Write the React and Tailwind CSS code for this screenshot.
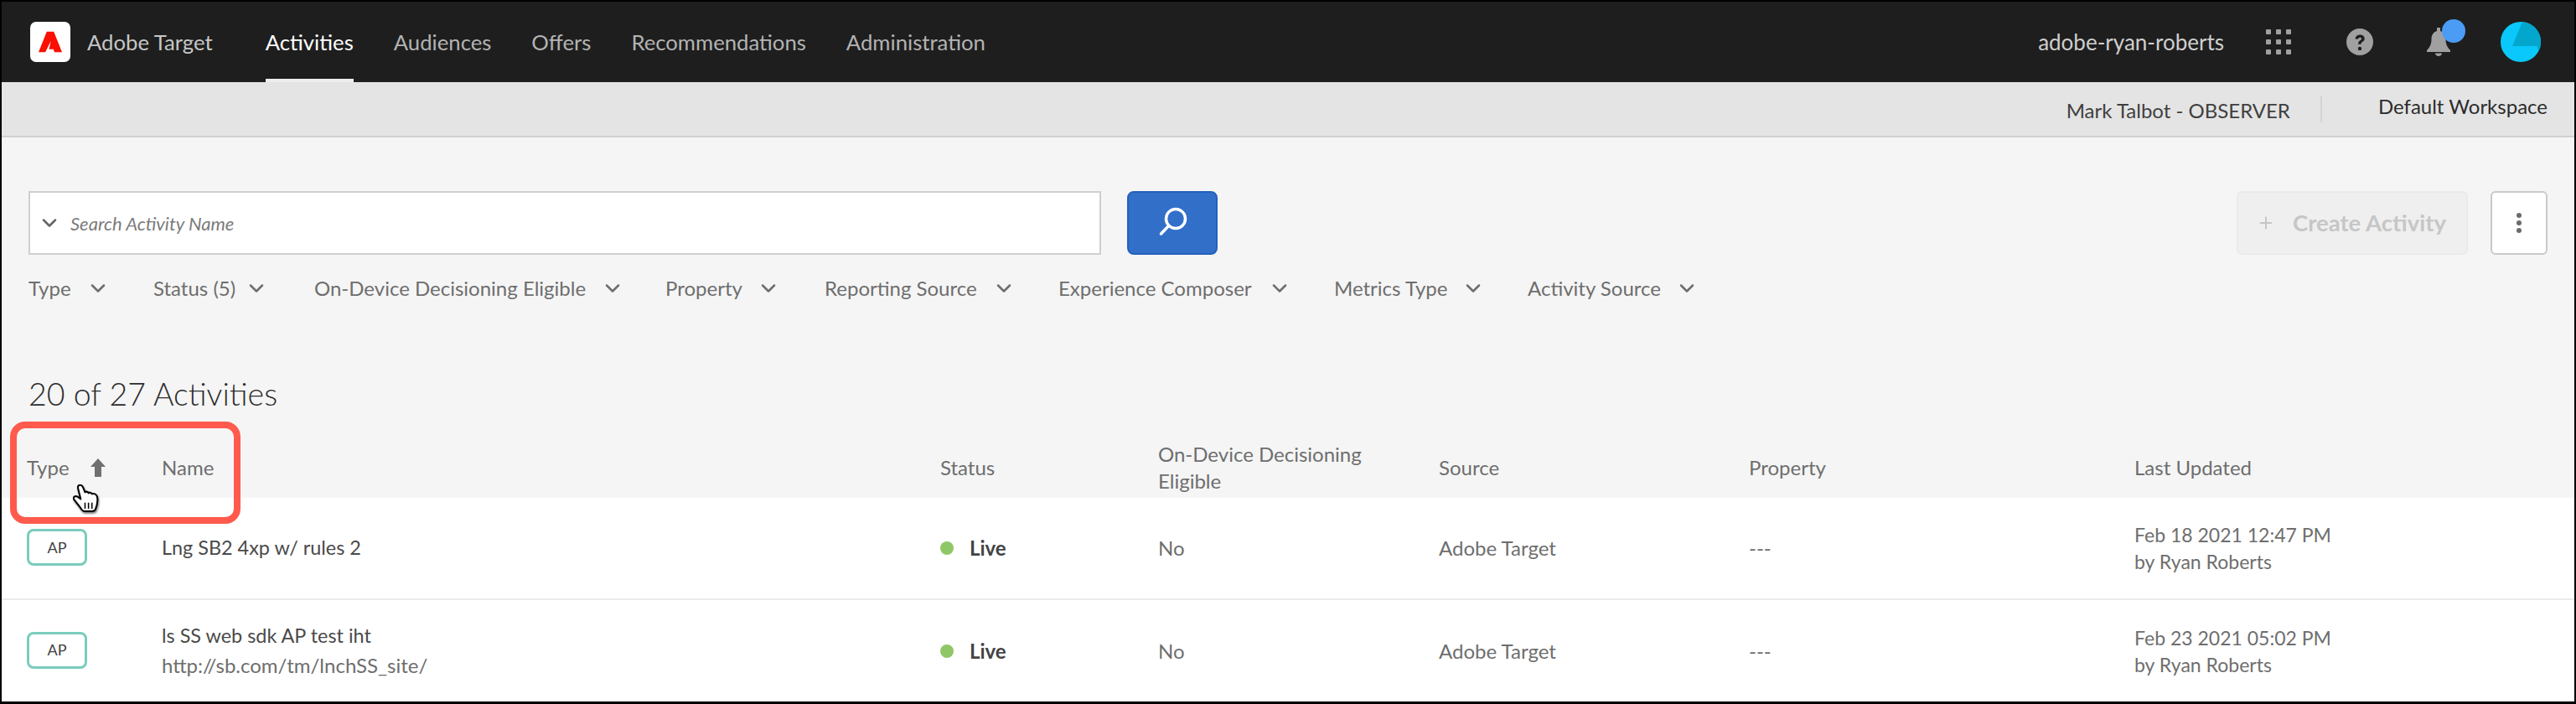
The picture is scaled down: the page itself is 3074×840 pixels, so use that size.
import React from 'react';
import { ChevronDown, Plus } from 'lucide-react';

const navLinks = ['Audiences', 'Offers', 'Recommendations', 'Administration'];

const filters = [
  { label: 'Type', width: 'w-[149px]', gap: 'ml-[18px]' },
  { label: 'Status (5)', width: 'w-[192px]', gap: 'ml-[11px]' },
  { label: 'On-Device Decisioning Eligible', width: 'w-[419px]', gap: 'ml-[18px]' },
  { label: 'Property', width: 'w-[190px]', gap: 'ml-[17px]' },
  { label: 'Reporting Source', width: 'w-[279px]', gap: 'ml-[18px]' },
  { label: 'Experience Composer', width: 'w-[329px]', gap: 'ml-[19px]' },
  { label: 'Metrics Type', width: 'w-[231px]', gap: 'ml-[17px]' },
  { label: 'Activity Source', width: 'w-[240px]', gap: 'ml-[17px]' },
];

const rows = [
  { name: 'Lng SB2 4xp w/ rules 2', url: null, date: 'Feb 18 2021 12:47 PM', height: 'h-[122px] border-b-2 border-[#ebebeb]' },
  { name: 'ls SS web sdk AP test iht', url: 'http://sb.com/tm/lnchSS_site/', date: 'Feb 23 2021 05:02 PM', height: 'h-[121px]' },
];

const cols = 'grid grid-cols-[161px_929px_260px_335px_370px_460px_1fr] items-center pl-[30px]';

const App = () => {
  return (
    <div className="relative h-[840px] w-[3074px] overflow-hidden border-2 border-b-[3px] border-black bg-[#f5f5f5] font-['Lato',sans-serif] text-[24px] text-[#6e6e6e]">
      <header className="flex h-[96px] items-center justify-between bg-[#1e1e1e] pl-[34px] pr-[40px] text-[25.700px]">
        <div className="flex h-full items-center">
          <div className="flex h-[48px] w-[48px] items-center justify-center rounded-[7px] bg-white">
            <svg className="h-[26px] w-[28px]" viewBox="0 0 30 26" fill="#fa0f00">
              <path d="M10.500 0h9L30 26h-9.600L19 22.500h-5.500L15.700 12 8.700 26H0z" />
            </svg>
          </div>
          <span className="ml-[20px] text-[#c6c6c6]">Adobe Target</span>
          <nav className="ml-[63px] flex h-full items-center gap-[48px]">
            <a className="flex h-full items-center border-b-4 border-[#eeeeee] pt-[4px] text-white">Activities</a>
            {navLinks.map((link) => (
              <a key={link} className="text-[#b3b3b3]">
                {link}
              </a>
            ))}
          </nav>
        </div>
        <div className="flex items-center">
          <span className="text-[26px] text-[#cfcfcf]">adobe-ryan-roberts</span>
          <div className="ml-[50px] grid grid-cols-3 gap-[6px]">
            {[...Array(9)].map((_, i) => (
              <span key={i} className="h-[6px] w-[6px] rounded-[1px] bg-[#a0a0a0]" />
            ))}
          </div>
          <svg className="ml-[66px] h-[32px] w-[32px]" viewBox="0 0 32 32">
            <circle cx="16" cy="16" r="16" fill="#a0a0a0" />
            <path d="M10.500 12.500c.3-3.300 2.600-5 5.700-5 3.200 0 5.500 1.800 5.500 4.600 0 2-1.100 3.100-2.600 4-1.200.8-1.600 1.300-1.600 2.700h-3.400c0-2.500.7-3.600 2.300-4.600 1-.7 1.700-1.200 1.700-2 0-.9-.7-1.500-1.800-1.500-1.200 0-1.900.7-2.100 1.800z" fill="#1e1e1e" />
            <circle cx="16" cy="24" r="2.200" fill="#1e1e1e" />
          </svg>
          <div className="relative ml-[64px] h-[34px] w-[28px]">
            <svg className="h-[34px] w-[28px]" viewBox="0 0 28 34" fill="#a0a0a0">
              <path d="M12 0h4v4c5 1.500 6.500 5.500 6.500 10 0 5 1.500 9 5.500 13v2H0v-2c4-4 5.500-8 5.500-13 0-4.500 1.500-8.500 6.500-10z" />
              <path d="M10 30.500h8c0 2-1.800 3.500-4 3.500s-4-1.500-4-3.500z" />
            </svg>
            <span className="absolute left-[18px] top-[-10px] h-[28px] w-[28px] rounded-full bg-[#4b9cf5]" />
          </div>
          <svg className="ml-[60px] h-[48px] w-[48px]" viewBox="0 0 48 48">
            <circle cx="24" cy="24" r="24" fill="#0ac8fb" />
            <path d="M26 .1A24 24 0 0 1 45.500 35L43.500 29H14z" fill="#03a6cc" />
          </svg>
        </div>
      </header>

      <div className="flex h-[66px] items-center justify-end border-b-2 border-[#d0d0d0] bg-[#e4e4e4] pr-[32px] text-[#3f3f3f]">
        <span className="pt-[4px]">Mark Talbot - OBSERVER</span>
        <span className="ml-[36px] mr-[67px] h-[32px] w-[2px] bg-[#d3d3d3]" />
        <span className="pb-[6px] text-[#2c2c2c]">Default Workspace</span>
      </div>

      <div className="flex items-center justify-between pl-[32px] pr-[32px] pt-[64px]">
        <div className="flex items-center">
          <div className="flex h-[76px] w-[1280px] items-center border-2 border-[#cfcfcf] bg-white pl-[9px] text-[22px] text-[#7b7b7b]">
            <ChevronDown className="h-[28px] w-[28px] text-[#666666]" strokeWidth={2.2} />
            <span className="ml-[11px] italic">Search Activity Name</span>
          </div>
          <button className="ml-[31px] flex h-[76px] w-[108px] items-center justify-center rounded-[8px] border-2 border-[#2460bd] bg-[#326fc9]">
            <svg className="h-[44px] w-[44px]" viewBox="0 0 44 44" fill="none" stroke="white" strokeWidth="3.500" strokeLinecap="round">
              <circle cx="26" cy="17" r="11.500" />
              <path d="M17.500 25.500L8.500 35" />
            </svg>
          </button>
        </div>
        <div className="flex items-center gap-[27px]">
          <button className="flex h-[76px] w-[276px] items-center rounded-[6px] border-2 border-[#eaeaea] bg-[#efefef] pl-[22px] text-[27.500px] font-bold text-[#c6c6c6]">
            <Plus className="h-[22px] w-[22px]" strokeWidth={2.2} />
            <span className="ml-[21px]">Create Activity</span>
          </button>
          <button className="flex h-[76px] w-[68px] flex-col items-center justify-center gap-[3px] rounded-[6px] border-2 border-[#c9c9c9] bg-white">
            <span className="h-[6px] w-[6px] rounded-full bg-[#6b6b6b]" />
            <span className="h-[6px] w-[6px] rounded-full bg-[#6b6b6b]" />
            <span className="h-[6px] w-[6px] rounded-full bg-[#6b6b6b]" />
          </button>
        </div>
      </div>

      <div className="mt-[22px] flex pl-[32px]">
        {filters.map((filter) => (
          <div key={filter.label} className={`${filter.width} flex items-center whitespace-nowrap`}>
            <span>{filter.label}</span>
            <ChevronDown className={`${filter.gap} h-[28px] w-[28px] shrink-0`} strokeWidth={2.2} />
          </div>
        ))}
      </div>

      <h1 className="mt-[84px] pl-[32px] text-[37.500px] font-light leading-[48px] text-[#2c2c2c]">20 of 27 Activities</h1>

      <div className={`${cols} mt-[8px] h-[92px] pt-[20px]`}>
        <div className="flex items-center">
          <span>Type</span>
          <svg className="ml-[25px] h-[22px] w-[18px]" viewBox="0 0 18 22" fill="#707070">
            <path d="M9 0l9 10h-5v12H5V10H0z" />
          </svg>
        </div>
        <span>Name</span>
        <span>Status</span>
        <span className="w-[260px] leading-[32px]">On-Device Decisioning Eligible</span>
        <span>Source</span>
        <span>Property</span>
        <span>Last Updated</span>
      </div>

      {rows.map((row) => (
        <div key={row.name} className={`${cols} ${row.height} bg-white`}>
          <div className="mb-[2px] flex h-[44px] w-[72px] items-center justify-center rounded-[8px] border-[3px] border-[#7accbd] bg-white text-[18px] text-[#3f3f3f]">
            AP
          </div>
          <div>
            <div className="text-[23.400px] text-[#4a4a4a]">{row.name}</div>
            {row.url && <div className="text-[#6e6e6e]">{row.url}</div>}
          </div>
          <div className="flex items-center">
            <span className="h-[16px] w-[16px] rounded-full bg-[#8fc766]" />
            <span className="ml-[19px] font-bold text-[#444444]">Live</span>
          </div>
          <span>No</span>
          <span>Adobe Target</span>
          <span>---</span>
          <div className="text-[23px] leading-[32px]">
            <div>{row.date}</div>
            <div>by Ryan Roberts</div>
          </div>
        </div>
      ))}

      {/* callout round the sortable columns, with the pointer on top */}
      <div className="absolute left-[10px] top-[501px] h-[122px] w-[275px] rounded-[18px] border-8 border-[#ff5a4d]" />
      <svg className="absolute left-[85px] top-[576px] h-[33px] w-[31px] drop-shadow-[1px_2px_1px_rgba(0,0,0,0.5)]" viewBox="0 0 30 32" fill="white" stroke="black" strokeWidth="2" strokeLinejoin="round">
        <path d="M7 1c2-1 4 0 5 3l2 5c1-1 3-1 4 1 1-1 3-1 4 1 2-1 5 0 6 3 1 4 0 10-2 15-1 2-2 2-4 2h-9c-2 0-3-2-5-5l-7-9c-1-2 1-4 4-3l4 3L6 5c-.5-2 0-3.500 1-4z" />
        <path d="M14 21v7M18 21v7M22 21v7" strokeWidth="1.500" />
      </svg>
    </div>
  );
};

export default App;
